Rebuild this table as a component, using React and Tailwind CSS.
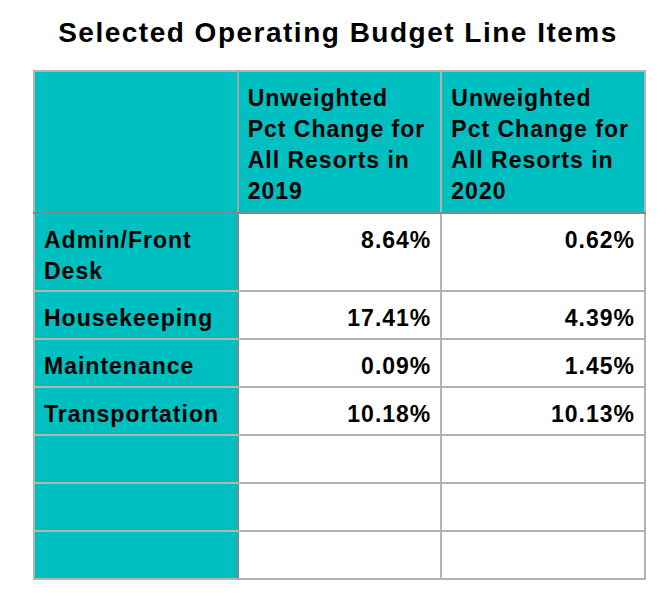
const rows = [
  { label: ["Admin/Front", "Desk"], a: "8.64%", b: "0.62%", h: "h-[78px]" },
  { label: ["Housekeeping"], a: "17.41%", b: "4.39%", h: "h-[48px]" },
  { label: ["Maintenance"], a: "0.09%", b: "1.45%", h: "h-[48px]" },
  { label: ["Transportation"], a: "10.18%", b: "10.13%", h: "h-[48px]" },
  { label: [], a: "", b: "", h: "h-[48px]" },
  { label: [], a: "", b: "", h: "h-[48px]" },
  { label: [], a: "", b: "", h: "h-[48px]" },
];

const headLines = (year) => ["Unweighted", "Pct Change for", "All Resorts in", year];

const cell = "border-2 border-[#b4b4b4] align-top pt-[11px] px-[9px]";

export default function App() {
  return (
    <div className="w-[667px] h-[600px] bg-white font-['Liberation_Sans',Arial,sans-serif] font-bold text-black">
      <h1 className="pt-[17px] pl-[9px] text-center text-[28px] leading-[32px] tracking-[1.5px]">
        Selected Operating Budget Line Items
      </h1>

      <table className="mt-[21px] ml-[33px] w-[613px] table-fixed border-collapse text-[23px] leading-[31px] tracking-[1px]">
        <thead>
          <tr className="h-[142px] bg-[#00bfc0]">
            <th className={`${cell} border-b-[#6f8e8e] border-r-[#9aa9a9]`}></th>
            {["2019", "2020"].map((y) => (
              <th key={y} className={`${cell} border-b-[#6f8e8e] text-left font-bold whitespace-nowrap`}>
                {headLines(y).map((l) => (
                  <div key={l}>{l}</div>
                ))}
              </th>
            ))}
          </tr>
        </thead>
        <tbody>
          {rows.map((r, i) => (
            <tr key={i} className={r.h}>
              <td className={`${cell} border-r-[#6f8e8e] bg-[#00bfc0]`}>
                {r.label.map((l) => (
                  <div key={l}>{l}</div>
                ))}
              </td>
              <td className={`${cell} bg-white text-right`}>{r.a}</td>
              <td className={`${cell} bg-white text-right`}>{r.b}</td>
            </tr>
          ))}
        </tbody>
      </table>
    </div>
  );
}
